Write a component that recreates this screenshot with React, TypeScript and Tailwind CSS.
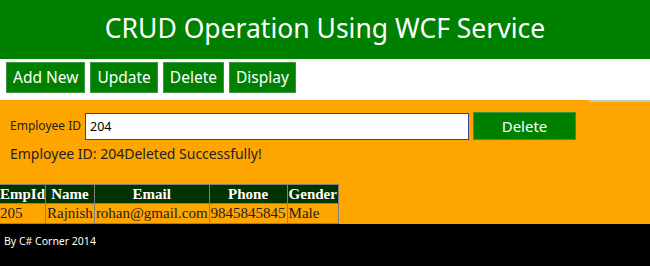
import React from 'react'

const rows = [
    { id: '205', name: 'Rajnish', email: 'rohan@gmail.com', phone: '9845845845', gender: 'Male' }
]

export default function App() {
    return (
        <div className="w-[650px] h-[266px] overflow-hidden bg-white font-['Noto_Sans',sans-serif]">
            {/* Header */}
            <div className="h-[59px] bg-[#008000] flex items-center justify-center">
                <h1 className="text-white text-[26.5px] leading-none pb-[2px]">CRUD Operation Using WCF Service</h1>
            </div>

            {/* Menu */}
            <div className="h-[41px] bg-white flex items-start gap-[5px] pl-[6px] pt-[3px]">
                {['Add New', 'Update', 'Delete', 'Display'].map((t) => (
                    <button key={t} className="h-[31px] px-[6px] bg-[#008000] border border-[#3f923f] text-white text-[15.5px] leading-none">
                        {t}
                    </button>
                ))}
            </div>

            {/* Content */}
            <div className="relative h-[124px] bg-[#ffa500]">
                <div className="absolute right-0 top-0 w-[61px] h-[2px] bg-[#c8c8c8]" />
                <div className="flex items-center pt-[12px] pl-[10px]">
                    <label className="text-[12px] text-[#222] mr-[4px]">Employee ID</label>
                    <input
                        defaultValue="204"
                        className="w-[384px] h-[27px] bg-white border border-[#3c3c9a] px-[4px] text-[12.5px] text-black outline-none"
                    />
                    <button className="ml-[4px] w-[103px] h-[28px] bg-[#008000] border border-[#3f923f] text-white text-[15px] leading-none">
                        Delete
                    </button>
                </div>
                <p className="pl-[10px] pt-[4px] text-[14px] text-[#222] leading-5">Employee ID: 204Deleted Successfully!</p>

                <table className="mt-[20px] border-collapse font-['Liberation_Serif',serif] text-[15px] leading-none">
                    <thead>
                        <tr className="bg-[#003300] text-white h-[19px]">
                            <th className="border border-[#808080] border-l-0 px-0">EmpId</th>
                            <th className="border border-[#808080] px-[1px]">Name</th>
                            <th className="border border-[#808080] px-[1px]">Email</th>
                            <th className="border border-[#808080] px-[1px]">Phone</th>
                            <th className="border border-[#808080] px-[1px]">Gender</th>
                        </tr>
                    </thead>
                    <tbody>
                        {rows.map((r) => (
                            <tr key={r.id} className="h-[20px] text-[#222]">
                                <td className="border border-[#808080] border-l-0 px-0">{r.id}</td>
                                <td className="border border-[#808080] px-[1px]">{r.name}</td>
                                <td className="border border-[#808080] px-[1px]">{r.email}</td>
                                <td className="border border-[#808080] px-[1px]">{r.phone}</td>
                                <td className="border border-[#808080] px-[1px]">{r.gender}</td>
                            </tr>
                        ))}
                    </tbody>
                </table>
            </div>

            {/* Footer */}
            <div className="h-[42px] bg-black pl-[4px] pt-[3px]">
                <span className="text-white text-[10.5px]">By C# Corner 2014</span>
            </div>
        </div>
    )
}
